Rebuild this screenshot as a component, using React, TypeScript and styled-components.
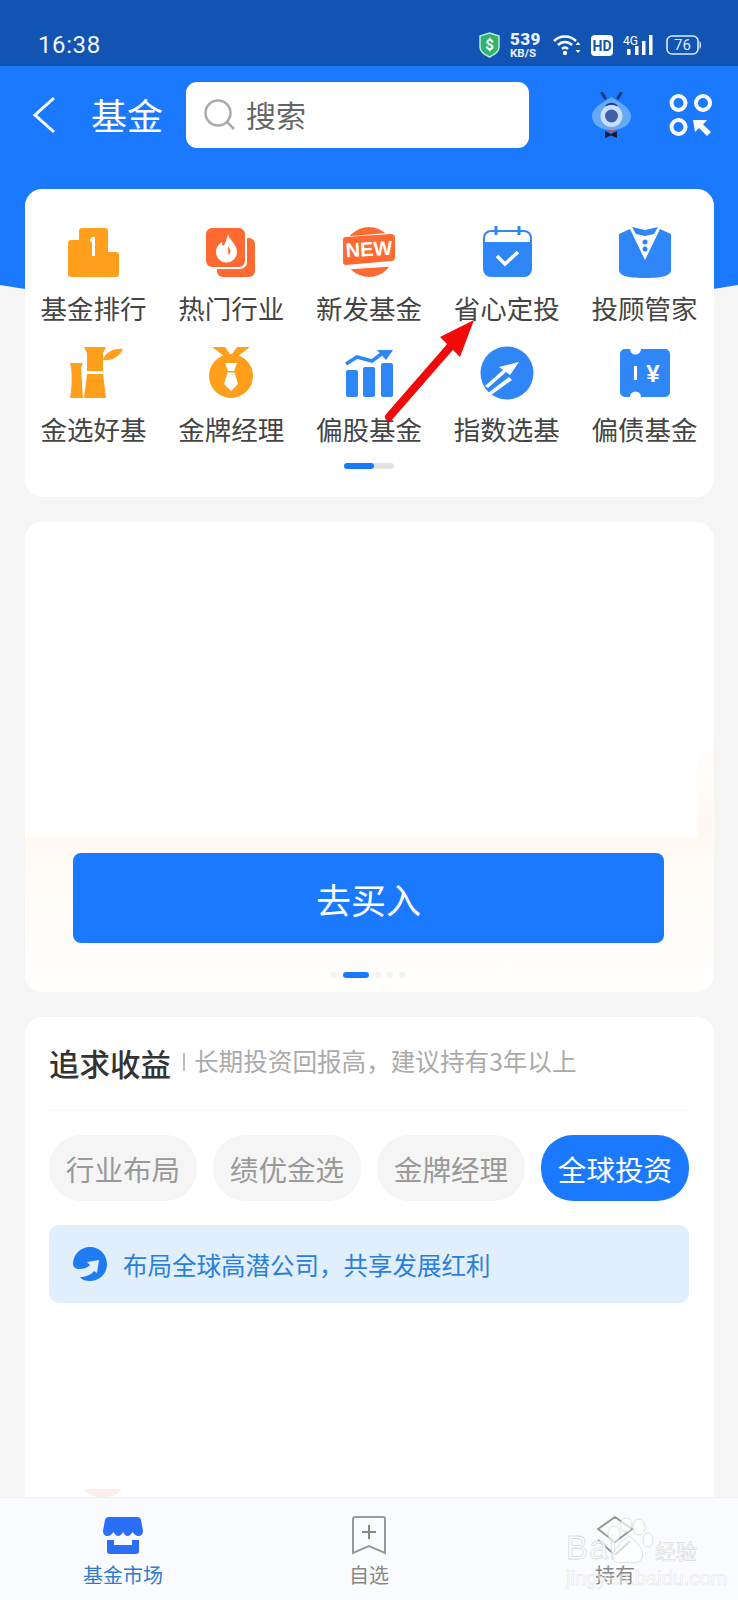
import React from "react";
import styled, { createGlobalStyle } from "styled-components";

const BLUE = "#1a79ff";
const ICON_BLUE = "#2f86f6";
const ORANGE = "#ff9f1c";
const CORAL = "#ff6a33";

const GlobalStyle = createGlobalStyle`
  html, body {
    margin: 0;
    padding: 0;
    background: #f5f5f5;
    font-family: "Noto Sans CJK SC", "Noto Sans", sans-serif;
  }
  * { box-sizing: border-box; }
`;

const Page = styled.div`
  position: relative;
  width: 738px;
  height: 1600px;
  overflow: hidden;
  display: flex;
  flex-direction: column;
  background: #f5f5f5;
`;

const StatusBar = styled.div`
  flex: none;
  height: 66px;
  padding: 24px 36px 0 38px;
  display: flex;
  align-items: center;
  background: #1254b4;
  color: #f2f6fc;
`;

const Time = styled.span`
  flex: 1;
  font-family: Roboto, sans-serif;
  font-size: 24px;
  letter-spacing: 0.6px;
`;

const Speed = styled.div`
  width: 40px;
  margin: 0 3px 0 10px;
  display: flex;
  flex-direction: column;
  font-family: Roboto, sans-serif;
  font-weight: 700;
  color: #eaf1fb;
  b { font-size: 17px; line-height: 15px; letter-spacing: 0.4px; }
  small { font-size: 11.5px; line-height: 12px; }
`;

const StatusGroup = styled.div`
  display: flex;
  align-items: center;
  gap: 10px;
`;

const Main = styled.div`
  position: relative;
  flex: 1;
  min-height: 0;
  overflow: hidden;
  &::before {
    content: "";
    position: absolute;
    top: 0;
    left: -51px;
    width: 840px;
    height: 240px;
    background: ${BLUE};
    border-radius: 0 0 50% 50% / 0 0 40px 40px;
  }
`;

const Header = styled.header`
  position: relative;
  height: 123px;
  padding-top: 16px;
  display: flex;
  align-items: flex-start;
`;

const BackButton = styled.svg`
  flex: none;
  width: 30px;
  height: 66px;
  margin-left: 30px;
`;

const HeaderTitle = styled.h1`
  width: 95px;
  margin: 0 0 0 31px;
  font-size: 36px;
  font-weight: 400;
  line-height: 64px;
  color: #fff;
`;

const SearchBox = styled.div`
  width: 343px;
  height: 66px;
  padding: 0 0 2px 18px;
  display: flex;
  align-items: center;
  gap: 11px;
  background: #fff;
  border-radius: 11px;
  font-size: 30px;
  color: #666;
`;

const HeaderIcon = styled.svg<{ $gap: number; $top: number }>`
  flex: none;
  margin-left: ${(p) => p.$gap}px;
  margin-top: ${(p) => p.$top}px;
`;

const Stack = styled.div`
  position: relative;
  display: flex;
  flex-direction: column;
  gap: 25px;
  padding: 0 24.5px;
`;

const Card = styled.section`
  border-radius: 17px;
  background: #fff;
`;

const ShortcutCard = styled(Card)`
  height: 308px;
  padding-top: 38px;
`;

const ShortcutGrid = styled.div`
  display: grid;
  grid-template-columns: repeat(5, 1fr);
  row-gap: 23px;
`;

const Shortcut = styled.div`
  display: flex;
  flex-direction: column;
  align-items: center;
`;

const ShortcutIcon = styled.svg`
  width: 60px;
  height: 52px;
  overflow: visible;
`;

const ShortcutLabel = styled.span`
  margin-top: 12px;
  font-size: 26.5px;
  line-height: 34px;
  color: #444;
  white-space: nowrap;
`;

const PagerTrack = styled.div`
  width: 50px;
  height: 6px;
  margin: 17px auto 0;
  border-radius: 3px;
  background: #e3e3e3;
`;

const PagerFill = styled.div`
  width: 30px;
  height: 6px;
  border-radius: 3px;
  background: ${BLUE};
`;

const PromoCard = styled(Card)`
  height: 470px;
  overflow: hidden;
  background: linear-gradient(to bottom, #fff 45%, #fff8f0 64%, #fffcf8 78%, #fffefd 100%);
`;

const PromoBlank = styled.div`
  height: 315px;
  margin-right: 16px;
  background: #fff;
`;

const BuyButton = styled.button`
  display: block;
  width: 591px;
  height: 90px;
  margin: 16px 0 0 48.5px;
  border: 0;
  border-radius: 8px;
  background: ${BLUE};
  color: #fff;
  font-family: inherit;
  font-size: 35px;
`;

const Dots = styled.div`
  margin: 29px 0 0 306px;
  display: flex;
  align-items: center;
  gap: 6px;
`;

const Dot = styled.span<{ $active?: boolean }>`
  width: ${(p) => (p.$active ? 26 : 6)}px;
  height: 6px;
  border-radius: 3px;
  background: ${(p) => (p.$active ? BLUE : "#f3f3f3")};
`;

const PicksCard = styled(Card)`
  height: 560px;
  padding: 0 24.5px;
`;

const PicksHead = styled.div`
  height: 94px;
  padding-top: 26px;
  display: flex;
  align-items: flex-start;
  border-bottom: 1px solid #f6f6f6;
`;

const PicksTitle = styled.h2`
  margin: 0;
  font-size: 30.5px;
  font-weight: 500;
  line-height: 40px;
  color: #333;
`;

const PicksNote = styled.span`
  margin: 1px 0 0 12px;
  padding-left: 11px;
  font-size: 24.6px;
  line-height: 32px;
  color: #aaa;
  white-space: nowrap;
  background: linear-gradient(#bbb, #bbb) no-repeat left 9px / 2px 18px;
`;

const Chips = styled.div`
  margin-top: 24px;
  display: grid;
  grid-template-columns: repeat(4, 1fr);
  gap: 16px;
`;

const Chip = styled.div<{ $active?: boolean }>`
  height: 66px;
  border-radius: 32px;
  display: flex;
  align-items: center;
  justify-content: center;
  font-size: 28.6px;
  background: ${(p) => (p.$active ? BLUE : "#f5f5f5")};
  color: ${(p) => (p.$active ? "#fff" : "#999")};
`;

const Tip = styled.div`
  height: 78px;
  margin-top: 24px;
  padding-left: 24px;
  display: flex;
  align-items: center;
  gap: 16px;
  border-radius: 10px;
  background: #e1eefc;
  font-size: 24.5px;
  color: #2a7fdc;
`;

const PeekShape = styled.div`
  width: 36px;
  height: 8px;
  margin: 186px 0 0 36px;
  border-radius: 0 0 50% 50% / 0 0 100% 100%;
  background: #fdeee9;
`;

const TabBar = styled.nav`
  position: relative;
  flex: none;
  height: 103px;
  display: grid;
  grid-template-columns: repeat(3, 1fr);
  border-top: 1px solid #eef1f5;
  background: #f9fbfe;
`;

const Tab = styled.div<{ $active?: boolean }>`
  padding-top: 17px;
  display: flex;
  flex-direction: column;
  align-items: center;
  font-size: 20px;
  line-height: 28px;
  color: ${(p) => (p.$active ? "#2f7ad0" : "#888")};
  svg { display: block; margin-bottom: 6px; }
`;

const ArrowMark = styled.svg`
  position: absolute;
  left: 380px;
  top: 315px;
`;

const Watermark = styled.div`
  position: absolute;
  left: 566px;
  top: 1518px;
  width: 131px;
  pointer-events: none;
`;

const WatermarkRow = styled.div`
  display: flex;
  align-items: flex-end;
  height: 46px;
`;

const WatermarkLogo = styled.span`
  font-family: "Liberation Sans", sans-serif;
  font-size: 33px;
  line-height: 32px;
  letter-spacing: 1.5px;
  color: rgba(255, 255, 255, 0.75);
  -webkit-text-stroke: 0.8px rgba(205, 205, 205, 0.7);
`;

const WatermarkCn = styled.span`
  margin-left: auto;
  font-size: 21px;
  line-height: 28px;
  color: rgba(255, 255, 255, 0.85);
  -webkit-text-stroke: 0.6px rgba(205, 205, 205, 0.8);
`;

const WatermarkPaw = styled.svg`
  position: absolute;
  left: 36px;
  top: 0;
`;

const WatermarkUrl = styled.div`
  margin-top: 3px;
  font-family: "Liberation Sans", sans-serif;
  font-size: 20px;
  line-height: 22px;
  white-space: nowrap;
  color: rgba(255, 255, 255, 0.6);
  -webkit-text-stroke: 0.5px rgba(205, 205, 205, 0.55);
`;

const Podium = () => (
  <>
    <path fill={ORANGE} d="M19 1h23a3 3 0 0 1 3 3v21h8a3 3 0 0 1 3 3v19a3 3 0 0 1-3 3H8a3 3 0 0 1-3-3V16a3 3 0 0 1 3-3h8V4a3 3 0 0 1 3-3z" />
    <path fill="#fff" d="M29 10h3v19h-3V14l-2 1v-2.500z" />
  </>
);

const FlameCards = () => (
  <>
    <rect x="16" y="11" width="38" height="39" rx="6" fill={CORAL} />
    <rect x="3" y="-1" width="43" height="43" rx="7" fill="#fff" />
    <rect x="5" y="1" width="39" height="39" rx="6" fill={CORAL} />
    <path fill="#fff" d="M27 7c1 6 9 10 9 18a10.500 10.500 0 0 1-21 0c0-5 3-8 6-10 0 2 .5 3 1.500 4 2-3 3.500-7 4.500-12z" />
    <path fill={CORAL} d="M27 19c.5 2 2.500 3 2.500 5.500a3 3 0 0 1-2.500 3c1-3-.5-5 0-8.500z" />
  </>
);

const NewBadge = () => (
  <>
    <circle cx="30" cy="25" r="25" fill={CORAL} />
    <path fill="#fff" d="M0 10 60 5v34L0 43z" />
    <path fill={CORAL} d="M7 10 52 7a4 4 0 0 1 4 4v19a4 4 0 0 1-4 4L7 38a3 3 0 0 1-3-3V13a3 3 0 0 1 3-3z" />
    <text x="30" y="29" textAnchor="middle" fontFamily="Liberation Sans" fontWeight="700" fontSize="20" fill="#fff" transform="rotate(-3 30 22)">NEW</text>
  </>
);

const CalendarCheck = () => (
  <>
    <rect x="6" y="3" width="49" height="47" rx="8" fill={ICON_BLUE} />
    <path fill="#fff" d="M8 15h45v-4a6 6 0 0 0-6-6H14a6 6 0 0 0-6 6z" />
    <path stroke={ICON_BLUE} strokeWidth="3" d="M19 -1v9M42 -1v9" />
    <path fill="none" stroke="#fff" strokeWidth="3.500" d="M20 29l8 8 13-12" />
  </>
);

const Vest = () => (
  <>
    <path fill={ICON_BLUE} d="M15 2 4 7v36c0 5 6 8 26 8s26-3 26-8V7L45 2 30 33z" />
    <path fill={ICON_BLUE} d="M17 0l13 3 13-3-4 7-9 2-9-2z" />
    <circle cx="30" cy="15" r="2.500" fill={ICON_BLUE} />
    <circle cx="30" cy="22" r="2.500" fill={ICON_BLUE} />
  </>
);

const Bamboo = () => (
  <>
    <path fill={ORANGE} d="M21 -1h22l-3 6v18H24V5z" />
    <path fill={ORANGE} d="M24 26h16l3 24H21z" />
    <path fill={ORANGE} d="M7 15h13l-2 5c1 10 1 20 2 30H7c2-11 2-23 1-31z" />
    <path fill={ORANGE} d="M40 12C42 5 50 0 60 1c-3 7-10 12-20 11z" />
  </>
);

const MedalTie = () => (
  <>
    <path fill={ORANGE} d="M11-1h13l5 7-6 2zM49-1H36l-5 7 6 2z" />
    <circle cx="30" cy="28" r="22" fill={ORANGE} />
    <path fill="#fff" d="M24 15h12l-3 8 4 13-7 7-7-7 4-13z" />
    <path fill={ORANGE} d="M25 23h10v1.500H25z" />
  </>
);

const BarChart = () => (
  <>
    <rect x="7" y="22" width="12" height="27" rx="2" fill={ICON_BLUE} />
    <rect x="24" y="19" width="12" height="30" rx="2" fill={ICON_BLUE} />
    <rect x="42" y="15" width="12" height="34" rx="2" fill={ICON_BLUE} />
    <path fill="none" stroke={ICON_BLUE} strokeWidth="3.500" d="M7 16 18 9l15 4 12-9" />
    <path fill={ICON_BLUE} d="M38 2h16l-7 10z" />
  </>
);

const RocketCircle = () => (
  <>
    <circle cx="30" cy="25" r="26.500" fill={ICON_BLUE} />
    <path fill="#fff" d="M42 14 22 19l4 3-18 16 3 2 18-16 4 3zM32 29l-21 16 3 2 21-15z" />
  </>
);

const Ticket = () => (
  <>
    <path fill={ICON_BLUE} d="M10 1h5a5.500 5.500 0 0 0 11 0h24a5 5 0 0 1 5 5v38a5 5 0 0 1-5 5H26a5.500 5.500 0 0 0-11 0h-5a5 5 0 0 1-5-5V6a5 5 0 0 1 5-5z" />
    <rect x="19" y="18" width="3" height="14" fill="#fff" />
    <text x="38" y="34" textAnchor="middle" fontFamily="Liberation Sans" fontWeight="700" fontSize="24" fill="#fff">¥</text>
  </>
);

const shortcuts = [
  { label: "基金排行", art: <Podium /> },
  { label: "热门行业", art: <FlameCards /> },
  { label: "新发基金", art: <NewBadge /> },
  { label: "省心定投", art: <CalendarCheck /> },
  { label: "投顾管家", art: <Vest /> },
  { label: "金选好基", art: <Bamboo /> },
  { label: "金牌经理", art: <MedalTie /> },
  { label: "偏股基金", art: <BarChart /> },
  { label: "指数选基", art: <RocketCircle /> },
  { label: "偏债基金", art: <Ticket /> },
];

const chips = ["行业布局", "绩优金选", "金牌经理", "全球投资"];

export default function App() {
  return (
    <Page>
      <GlobalStyle />
      <StatusBar>
        <Time>16:38</Time>
        <svg width="21" height="26" viewBox="0 0 21 26">
          <path fill="#2fb36f" stroke="#bfe9d2" strokeWidth="1.500" d="M10.500 1 20 4v11c0 5-5 8-9.500 10C6 23 1 20 1 15V4z" />
          <text x="10.500" y="18" textAnchor="middle" fontFamily="Roboto" fontWeight="700" fontSize="15" fill="#fff">$</text>
        </svg>
        <Speed>
          <b>539</b>
          <small>KB/S</small>
        </Speed>
        <StatusGroup>
          <svg width="28" height="22" viewBox="0 0 28 22">
            <g fill="none" stroke="#fff" strokeWidth="2.500">
              <path d="M1 7c6-6 16-6 22 0" />
              <path d="M5 11c4-4 10-4 14 0" />
              <path d="M9 15c2-2 4-2 6 0" />
            </g>
            <circle cx="12" cy="19" r="2.200" fill="#fff" />
            <path fill="#fff" d="M25 8l2.500 3h-5zM25 19l-2.500-3h5z" />
          </svg>
          <svg width="22" height="21" viewBox="0 0 22 21">
            <rect width="22" height="21" rx="4" fill="#fff" />
            <text x="11" y="16" textAnchor="middle" fontFamily="Roboto" fontWeight="700" fontSize="14" fill="#1254b4">HD</text>
          </svg>
          <svg width="30" height="22" viewBox="0 0 30 22">
            <text x="0" y="11" fontFamily="Roboto" fontSize="12" fill="#fff">4G</text>
            <g fill="#fff">
              <rect x="4" y="15" width="3.500" height="6" />
              <rect x="12" y="12" width="3.500" height="9" />
              <rect x="19" y="7" width="3.500" height="14" />
              <rect x="26" y="1" width="3.500" height="20" />
            </g>
          </svg>
          <svg width="36" height="20" viewBox="0 0 36 20" style={{ marginLeft: 3 }}>
            <rect x="1" y="1" width="31" height="18" rx="5" fill="none" stroke="#dfe9f7" strokeWidth="1.600" />
            <path fill="#dfe9f7" d="M33.500 6c2 1 2 7 0 8z" />
            <text x="16.500" y="15" textAnchor="middle" fontFamily="Roboto" fontSize="15" fill="#dfe9f7">76</text>
          </svg>
        </StatusGroup>
      </StatusBar>

      <Main>
        <Header>
          <BackButton viewBox="0 0 30 66">
            <path fill="none" stroke="#fff" strokeWidth="3" d="M24 16 5 33l19 17" />
          </BackButton>
          <HeaderTitle>基金</HeaderTitle>
          <SearchBox>
            <svg width="31" height="31" viewBox="0 0 31 31">
              <circle cx="14" cy="14" r="12.500" fill="none" stroke="#aaa" strokeWidth="2.500" />
              <path stroke="#aaa" strokeWidth="2.500" d="M23 23l7 7" />
            </svg>
            搜索
          </SearchBox>
          <HeaderIcon $gap={62} $top={10} width="41" height="46" viewBox="0 0 41 46">
            <path stroke="#143b78" strokeWidth="3" strokeLinecap="round" d="M11 1l3 5M30 1l-3 5" />
            <path fill="#64a8f8" d="M20.500 5C26 9 40 15 40 24c0 9-9 14-19.500 14S1 33 1 24C1 15 15 9 20.500 5z" />
            <path fill="none" stroke="#1f3f7a" strokeWidth="2" d="M15 14c3-3 8-3 11 0" />
            <circle cx="20.500" cy="24" r="11" fill="#c9def9" />
            <circle cx="20.500" cy="24" r="6.500" fill="#3f5fa8" />
            <path fill="#1a1f33" d="M14 39l6 3 6-3v7l-6-2.500-6 2.500z" />
            <path fill="#d9534f" d="M17 38h7l-3.500 3z" />
          </HeaderIcon>
          <HeaderIcon $gap={36} $top={11} width="45" height="44" viewBox="0 0 45 44">
            <g fill="none" stroke="#fff" strokeWidth="4">
              <circle cx="10.500" cy="10" r="7" />
              <circle cx="35" cy="10" r="7" />
              <circle cx="10.500" cy="34" r="7" />
            </g>
            <path fill="#fff" d="M25 27h14l-4 4.500L43 39l-4 4-8-8-4 4z" />
          </HeaderIcon>
        </Header>

        <Stack>
          <ShortcutCard>
            <ShortcutGrid>
              {shortcuts.map((item) => (
                <Shortcut key={item.label}>
                  <ShortcutIcon viewBox="0 0 60 52">{item.art}</ShortcutIcon>
                  <ShortcutLabel>{item.label}</ShortcutLabel>
                </Shortcut>
              ))}
            </ShortcutGrid>
            <PagerTrack>
              <PagerFill />
            </PagerTrack>
          </ShortcutCard>

          <PromoCard>
            <PromoBlank />
            <BuyButton>去买入</BuyButton>
            <Dots>
              <Dot />
              <Dot $active />
              <Dot />
              <Dot />
              <Dot />
            </Dots>
          </PromoCard>

          <PicksCard>
            <PicksHead>
              <PicksTitle>追求收益</PicksTitle>
              <PicksNote>长期投资回报高，建议持有3年以上</PicksNote>
            </PicksHead>
            <Chips>
              {chips.map((chip, i) => (
                <Chip key={chip} $active={i === chips.length - 1}>
                  {chip}
                </Chip>
              ))}
            </Chips>
            <Tip>
              <svg width="34" height="34" viewBox="0 0 34 34">
                <path fill="#1f7bf2" d="M17 0c9 0 17 7 17 17s-8 17-17 17c-4 0-8-1-10-4 5 0 11-2 14-6l3 2 2-13-12 2 3 3c-3 3-7 4-11 4-3 0-6-2-6-5C0 7 8 0 17 0z" />
              </svg>
              布局全球高潜公司，共享发展红利
            </Tip>
            <PeekShape />
          </PicksCard>
        </Stack>
      </Main>

      <TabBar>
        <Tab $active>
          <svg width="40" height="40" viewBox="0 0 40 40">
            <path fill="#2b6ef8" d="M6 2h28a4 4 0 0 1 4 3l2 11c0 3-2 5-4.500 5S31 19 29.500 17c-1 2-3 4-4.800 4S21 19 20 17c-1 2-3 4-4.800 4S11.500 19 10.500 17C9 19 7 21 4.500 21S0 19 0 16L2 5a4 4 0 0 1 4-3z" />
            <path fill="#2b6ef8" d="M4 25h7v5h18v-5h7v11a3 3 0 0 1-3 3H7a3 3 0 0 1-3-3z" />
          </svg>
          基金市场
        </Tab>
        <Tab>
          <svg width="40" height="40" viewBox="0 0 40 40">
            <path fill="none" stroke="#999" strokeWidth="2" d="M6 2h28a2 2 0 0 1 2 2v34l-16-7-16 7V4a2 2 0 0 1 2-2z" />
            <path stroke="#888" strokeWidth="2" d="M20 10v14M13 17h14" />
          </svg>
          自选
        </Tab>
        <Tab>
          <svg width="40" height="40" viewBox="0 0 40 40">
            <path fill="none" stroke="#999" strokeWidth="2" strokeLinejoin="round" d="M20 2 37 14 20 27 3 14z" />
            <path fill="none" stroke="#999" strokeWidth="2" d="M3 25l17 15 15-14" />
          </svg>
          持有
        </Tab>
      </TabBar>

      <ArrowMark width="100" height="110" viewBox="0 0 100 110">
        <path stroke="#f00a0a" strokeWidth="8" strokeLinecap="round" d="M9 102 70 32" />
        <path fill="#f00a0a" d="M94 5 60 22l20 20z" />
      </ArrowMark>

      <Watermark>
        <WatermarkPaw width="52" height="50" viewBox="0 0 52 50">
          <g fill="rgba(255,255,255,0.65)" stroke="rgba(205,205,205,0.6)">
            <ellipse cx="12" cy="16" rx="6" ry="8" />
            <ellipse cx="24" cy="7" rx="6" ry="7" />
            <ellipse cx="37" cy="9" rx="6" ry="8" />
            <ellipse cx="46" cy="22" rx="5" ry="7" />
            <path d="M27 18c8 6 16 14 13 22-2 6-10 5-14 4-5 1-13 2-15-3-2-8 8-17 16-23z" />
          </g>
        </WatermarkPaw>
        <WatermarkRow>
          <WatermarkLogo>Bai</WatermarkLogo>
          <WatermarkCn>经验</WatermarkCn>
        </WatermarkRow>
        <WatermarkUrl>jingyan.baidu.com</WatermarkUrl>
      </Watermark>
    </Page>
  );
}
